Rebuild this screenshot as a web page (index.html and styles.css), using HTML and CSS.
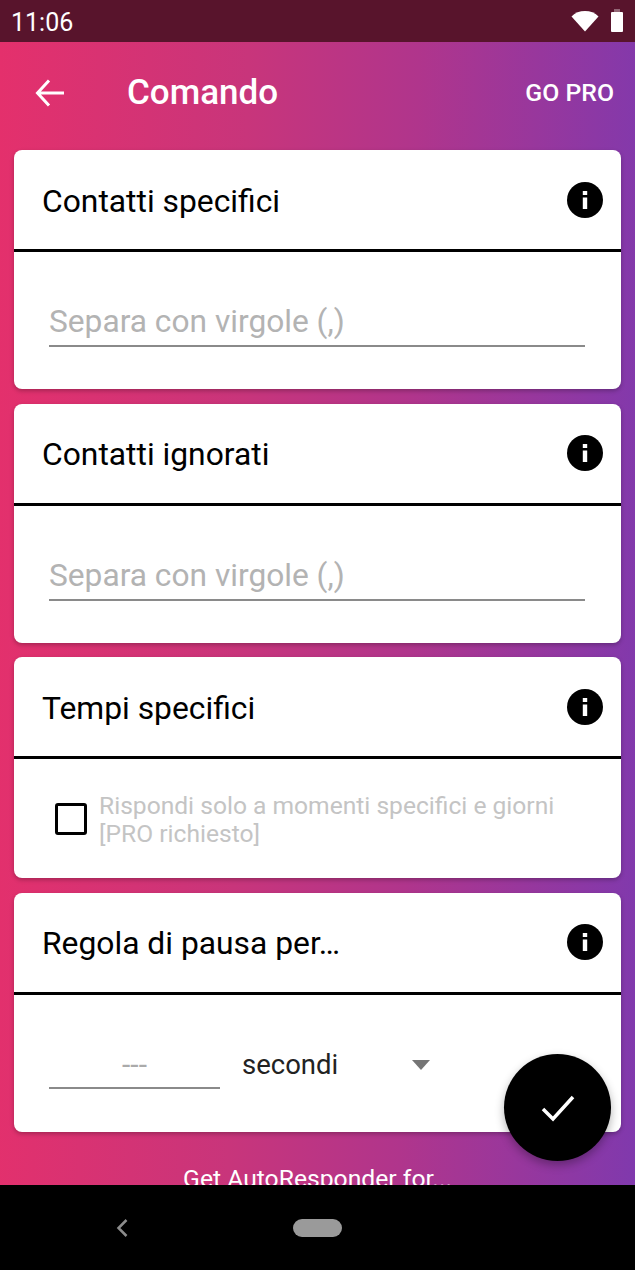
FILE: index.html
```html
<!DOCTYPE html>
<html lang="en">
<head>
    <meta charset="UTF-8">
    <meta name="viewport" content="width=device-width, initial-scale=1.0">
    <title>Comando</title>
    <link rel="stylesheet" href="styles.css">
</head>
<body>

<div class="screen">
    <div class="status-bar">
        <span class="clock">11:06</span>
        <div class="status-icons">
            <svg class="wifi" width="28" height="22" viewBox="0 0 28 22"><path d="M0.500 6.500C4 2.800 8.800 1 14 1s10 1.800 13.500 5.500L14 21.500z" fill="#fff"/></svg>
            <svg class="battery" width="14" height="24" viewBox="0 0 14 24"><path d="M4 0h6v3H4z" fill="#fff" opacity="0.35"/><rect x="1" y="3" width="12" height="20" rx="1" fill="#fff"/></svg>
        </div>
    </div>

    <div class="main">
        <div class="toolbar">
            <svg class="back" width="32" height="32" viewBox="0 0 32 32"><path d="M30 16H4M15 3.500L3.500 16 15 28.500" fill="none" stroke="#fff" stroke-width="3"/></svg>
            <h1 class="title">Comando</h1>
            <span class="go-pro">GO PRO</span>
        </div>

        <div class="card">
            <div class="card-head">
                <h2>Contatti specifici</h2>
                <svg class="info" width="36" height="36" viewBox="0 0 36 36"><circle cx="18" cy="18" r="18"/><path d="M15.800 15.500h4.400V27h-4.400zM15.800 9h4.400v4h-4.400z" fill="#fff"/></svg>
            </div>
            <div class="card-body field-body">
                <div class="text-field">Separa con virgole (,)</div>
            </div>
        </div>

        <div class="card">
            <div class="card-head">
                <h2>Contatti ignorati</h2>
                <svg class="info" width="36" height="36" viewBox="0 0 36 36"><circle cx="18" cy="18" r="18"/><path d="M15.800 15.500h4.400V27h-4.400zM15.800 9h4.400v4h-4.400z" fill="#fff"/></svg>
            </div>
            <div class="card-body field-body">
                <div class="text-field">Separa con virgole (,)</div>
            </div>
        </div>

        <div class="card">
            <div class="card-head">
                <h2>Tempi specifici</h2>
                <svg class="info" width="36" height="36" viewBox="0 0 36 36"><circle cx="18" cy="18" r="18"/><path d="M15.800 15.500h4.400V27h-4.400zM15.800 9h4.400v4h-4.400z" fill="#fff"/></svg>
            </div>
            <div class="card-body check-body">
                <span class="checkbox"></span>
                <p class="check-label">Rispondi solo a momenti specifici e giorni [PRO richiesto]</p>
            </div>
        </div>

        <div class="card">
            <div class="card-head">
                <h2>Regola di pausa per…</h2>
                <svg class="info" width="36" height="36" viewBox="0 0 36 36"><circle cx="18" cy="18" r="18"/><path d="M15.800 15.500h4.400V27h-4.400zM15.800 9h4.400v4h-4.400z" fill="#fff"/></svg>
            </div>
            <div class="card-body pause-body">
                <div class="pause-input">---</div>
                <div class="pause-select">
                    <span>secondi</span>
                    <span class="caret"></span>
                </div>
            </div>
        </div>

        <p class="footer-link">Get AutoResponder for...</p>

        <div class="fab">
            <svg width="36" height="28" viewBox="0 0 36 28"><path d="M3 15l10 10L33 3" fill="none" stroke="#fff" stroke-width="3.500"/></svg>
        </div>
    </div>

    <div class="nav-bar">
        <svg class="nav-back" width="14" height="20" viewBox="0 0 14 20"><path d="M11.500 2L3.500 10l8 8" fill="none" stroke="#8c8c8c" stroke-width="2.500"/></svg>
        <span class="nav-home"></span>
    </div>
</div>

</body>
</html>
```

FILE: styles.css
```css
* {
    box-sizing: border-box;
    margin: 0;
    padding: 0;
}
body {
    font-family: Roboto, "Liberation Sans", sans-serif;
    background: #000;
}
.screen {
    width: 635px;
    height: 1270px;
    display: flex;
    flex-direction: column;
    overflow: hidden;
}
.status-bar {
    height: 42px;
    flex: none;
    background: #58142c;
    color: #fff;
    display: flex;
    justify-content: space-between;
    align-items: center;
    padding: 0 11px;
}
.clock {
    font-size: 25px;
    padding-top: 2px;
}
.status-icons {
    display: flex;
    align-items: center;
    gap: 11px;
}
.main {
    flex: 1;
    position: relative;
    overflow: hidden;
    padding: 0 14px;
    display: flex;
    flex-direction: column;
    background: linear-gradient(91deg, #e4306c 0%, #c8357b 38%, #b0358c 64%, #8039ad 100%);
}
.toolbar {
    height: 108px;
    flex: none;
    margin: 0 -14px;
    padding: 0 21px 7px 34px;
    display: flex;
    align-items: center;
    color: #fff;
}
.title {
    font-size: 35px;
    font-weight: 500;
    margin-left: 61px;
    flex: 1;
}
.go-pro {
    font-size: 24.800px;
    font-weight: 500;
}
.card {
    flex: none;
    background: #fff;
    border-radius: 8px;
    margin-bottom: 14.5px;
    box-shadow: 0 2px 4px rgba(0, 0, 0, 0.25);
}
.card-head {
    height: 102px;
    padding: 0 18px 0 29px;
    border-bottom: 3px solid #000;
    display: flex;
    justify-content: space-between;
    align-items: center;
}
.card-head h2 {
    font-size: 31.800px;
    font-weight: 400;
    color: #000;
    margin: 2px 0 0 -1px;
}
.field-body {
    height: 137px;
    padding: 50px 36px 0 35px;
}
.text-field {
    height: 45px;
    font-size: 31.700px;
    line-height: 40px;
    color: #b3b3b3;
    border-bottom: 2px solid #8a8a8a;
}
.check-body {
    height: 119px;
    padding: 0 36px 0 41px;
    display: flex;
    align-items: center;
    gap: 12px;
}
.checkbox {
    width: 32px;
    height: 32px;
    flex: none;
    border: 3px solid #000;
    border-radius: 3px;
}
.check-label {
    font-size: 24.600px;
    line-height: 28px;
    padding-top: 2px;
    color: #c4c4c4;
}
.pause-body {
    height: 137px;
    padding: 36px 36px 0 35px;
    display: flex;
    gap: 22px;
}
.pause-input {
    width: 171px;
    height: 58px;
    font-size: 30px;
    line-height: 68px;
    text-align: center;
    color: #aaa;
    border-bottom: 2px solid #8a8a8a;
}
.pause-select {
    width: 189px;
    height: 68px;
    font-size: 27.500px;
    color: #222;
    display: flex;
    justify-content: space-between;
    align-items: center;
    padding-right: 1px;
}
.caret {
    width: 0;
    height: 0;
    border-left: 9px solid transparent;
    border-right: 9px solid transparent;
    border-top: 10px solid #757575;
}
.footer-link {
    margin-top: 18px;
    font-size: 24.700px;
    text-align: center;
    color: #fff;
}
.fab {
    position: absolute;
    left: 504px;
    top: 1012px;
    width: 107px;
    height: 107px;
    border-radius: 50%;
    background: #000;
    box-shadow: 0 4px 10px rgba(0, 0, 0, 0.3);
    display: flex;
    justify-content: center;
    align-items: center;
}
.nav-bar {
    height: 85px;
    flex: none;
    background: #000;
    position: relative;
    display: flex;
    justify-content: center;
    align-items: center;
}
.nav-back {
    position: absolute;
    left: 115px;
    top: 33px;
}
.nav-home {
    width: 49px;
    height: 18px;
    border-radius: 9px;
    background: #9a9a9a;
}
```
